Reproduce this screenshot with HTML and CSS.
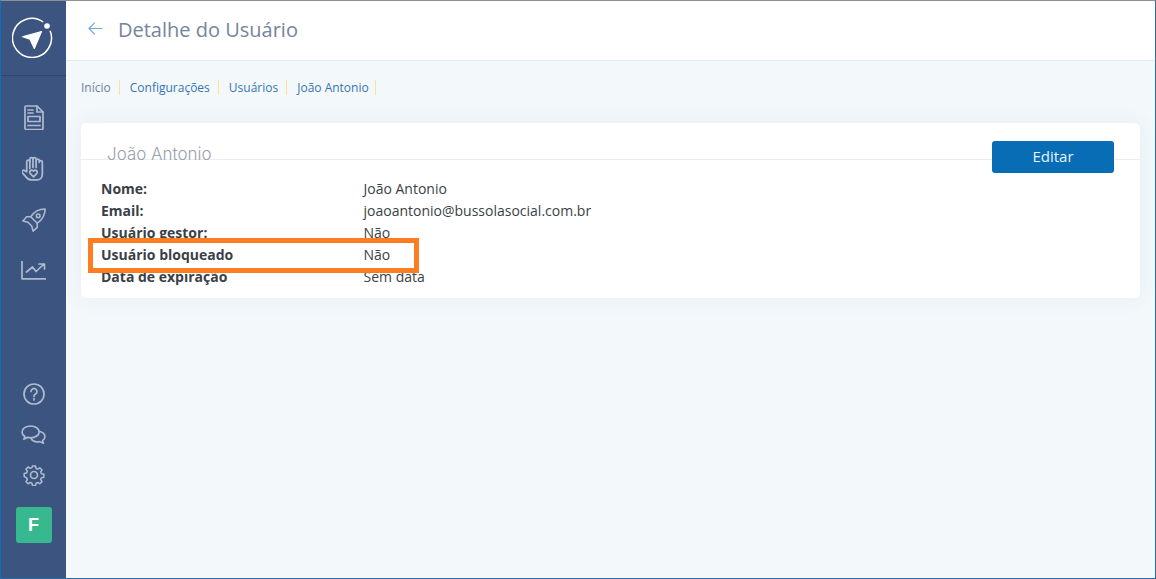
FILE: index.html
```html
<!DOCTYPE html>
<html lang="pt-BR">
<head>
<meta charset="utf-8">
<title>Detalhe do Usuário</title>
<link rel="stylesheet" href="styles.css">
</head>
<body>
<div class="app">
  <aside class="sidebar">
    <div class="logo">
      <svg class="logo-mark" width="42" height="42" viewBox="0 0 42 42" fill="none">
        <path d="M38.1 14.700A19.500 19.500 0 1 1 31.200 6" stroke="#fff" stroke-width="1.500"/>
        <circle cx="35" cy="10" r="2.800" fill="#fff"/>
        <path d="M10.500 20.800 29.500 15.500 22.300 32.500 18 23.200z" fill="#fff" stroke="#fff" stroke-width="1.200" stroke-linejoin="round"/>
      </svg>
    </div>
    <nav class="nav-top">
      <svg class="icon" width="20" height="25" viewBox="0 0 20 25"><path d="M2 1h11l6 6v16.500a1 1 0 0 1-1 1H2a1 1 0 0 1-1-1V2a1 1 0 0 1 1-1z"/><path d="M13 1v6h6M4 5h5M4 8h5M4 11.500h12v5H4zM4 20.500h12"/></svg>
      <svg class="icon" width="23" height="25" viewBox="0 0 22 24"><path d="M5.500 15V5.500a1.500 1.500 0 0 1 3 0V3a1.500 1.500 0 0 1 3 0V3a1.500 1.500 0 0 1 3 0v1.500a1.500 1.500 0 0 1 3 0V6a1.500 1.500 0 0 1 3 0v11c0 3.500-2 6-5 6h-5.500c-2.500 0-4-1.200-5.500-3.200L1.200 16c-1-1.500 1-3.200 2.300-2z" transform="translate(-1 0)"/><path d="M7.500 5v7M10.500 3v8M13.500 4.500V11M11 20l-3.300-3.400a1.900 1.900 0 0 1 2.800-2.500l.5.500.5-.500a1.900 1.900 0 0 1 2.800 2.500z"/></svg>
      <svg class="icon" width="24" height="24" viewBox="0 0 26 26"><path d="M25 1c-7 0-12 3-15.500 8.500l7 7C21.500 13 25 8 25 1z"/><circle cx="17.500" cy="8.500" r="2"/><path d="M9.500 9.500H5L1 14l5.500 1.500M16.500 16.500V21L12 25l-1.500-5.500M6.500 15.500l4 4"/></svg>
      <svg class="icon" width="25" height="19" viewBox="0 0 25 19"><path d="M1 0v17.800h24M5.500 11l6-5 3.500 4.500L23 3M18 3h5.500v5"/></svg>
    </nav>
    <nav class="nav-bottom">
      <svg class="icon" width="22" height="22" viewBox="0 0 22 22"><circle cx="11" cy="11" r="10"/><path d="M8 8.500a3 3 0 1 1 4.500 2.600c-1 .6-1.500 1.200-1.500 2.400M11 15.500v1.500"/></svg>
      <svg class="icon" width="25" height="19" viewBox="0 0 26 20"><path d="M10 1C5 1 1 3.800 1 7.300c0 2 1.200 3.700 3 4.800L2.800 15l4.200-2c1 .2 2 .4 3 .4 5 0 9-2.800 9-6.100S15 1 10 1z"/><path d="M19 6.500c3.300.8 6 3 6 5.800 0 1.800-1 3.200-2.500 4.200l1 2.700-4-1.700c-4 .7-7.500-.6-9-3.300"/></svg>
      <svg class="icon" width="22" height="22" viewBox="0 0 22 22"><circle cx="11" cy="11" r="3.500"/><path d="M9.300 1h3.400l.6 2.700 1.900.8 2.300-1.500 2.400 2.400-1.500 2.300.8 1.900 2.700.6v3.400l-2.700.6-.8 1.900 1.500 2.300-2.400 2.400-2.300-1.500-1.900.8-.6 2.700H9.300l-.6-2.700-1.900-.8-2.300 1.500-2.400-2.400 1.500-2.300-.8-1.900L.1 12.700V9.300l2.700-.6.8-1.900L2.100 4.500l2.400-2.400 2.300 1.500 1.900-.8z" transform="translate(1.100 1.100) scale(.9)"/></svg>
      <div class="avatar">F</div>
    </nav>
  </aside>
  <main class="main">
    <header class="topbar">
      <svg class="back" width="15" height="13" viewBox="0 0 15 13"><path d="M14.500 6.500H1M6.800 .7 1 6.500l5.800 5.800"/></svg>
      <h1 class="title">Detalhe do Usuário</h1>
    </header>
    <ul class="crumbs">
      <li>Início</li>
      <li>Configurações</li>
      <li>Usuários</li>
      <li>João Antonio</li>
    </ul>
    <section class="card">
      <div class="card-head">
        <h2 class="card-title">João Antonio</h2>
        <button class="edit" type="button">Editar</button>
      </div>
      <dl class="details">
        <div class="row"><dt>Nome:</dt><dd>João Antonio</dd></div>
        <div class="row"><dt>Email:</dt><dd>joaoantonio@bussolasocial.com.br</dd></div>
        <div class="row"><dt>Usuário gestor:</dt><dd>Não</dd></div>
        <div class="row"><dt>Usuário bloqueado</dt><dd>Não</dd></div>
        <div class="row"><dt>Data de expiração</dt><dd>Sem data</dd></div>
      </dl>
      <div class="highlight"></div>
    </section>
  </main>
</div>
</body>
</html>
```
FILE: styles.css
```css
* { box-sizing: border-box; }
html, body { margin: 0; height: 100%; }
body { font-family: "Open Sans", "Liberation Sans", sans-serif; background: #f3f8fb; }
.app {
  display: flex;
  width: 1156px;
  height: 579px;
  border-top: 1px solid #8f8f8f;
  border-left: 1px solid #1170bd;
  border-right: 1px solid #2a6ca6;
  border-bottom: 1px solid #2a6ca6;
  overflow: hidden;
}
.sidebar {
  width: 65px;
  flex: none;
  background: #3b5580;
  display: flex;
  flex-direction: column;
  align-items: center;
}
.logo {
  width: 100%;
  height: 75px;
  border-bottom: 1px solid #2f4668;
  display: flex;
  align-items: center;
  justify-content: center;
  padding: 0 0 2px 0;
}
.logo-mark { margin-left: -1px; }
.nav-top {
  display: grid;
  grid-auto-rows: 51px;
  place-items: center;
  padding-top: 16px;
}
.nav-bottom { margin-top: auto; display: flex; flex-direction: column; align-items: center; gap: 20px; padding-bottom: 35px; }
.icon { fill: none; stroke: #afbace; stroke-width: 1.700; stroke-linejoin: round; stroke-linecap: round; display: block; }
.avatar {
  width: 36px;
  height: 36px;
  margin-top: 1px;
  border-radius: 3px;
  background: #38b88f;
  color: #fff;
  font-family: "Liberation Sans", sans-serif;
  font-weight: 700;
  font-size: 18px;
  line-height: 36px;
  text-align: center;
}
.main { flex: 1; display: flex; flex-direction: column; min-width: 0; background: #f3f8fb; }
.topbar {
  height: 60px;
  flex: none;
  background: #fff;
  border-bottom: 1px solid #e2ebf2;
  display: flex;
  align-items: center;
  padding-left: 22px;
  gap: 15px;
}
.back { fill: none; stroke: #6fa8dc; stroke-width: 1.200; margin-top: -5px; }
.title { margin: 0; font-size: 20px; font-weight: 400; color: #75849a; margin-top: -2px; }
.crumbs { list-style: none; margin: 0; padding: 19px 0 0 15px; display: flex; height: 62px; flex: none; font-size: 12px; line-height: 15px; color: #3874b3; }
.crumbs li { height: 15px; padding-right: 8px; margin-right: 10px; border-right: 1px solid #fbe29a; }
.crumbs li:first-child { color: #71819f; }
.crumbs li:last-child { padding-right: 6px; }
.card {
  position: relative;
  margin: 0 15px 0 15px;
  width: 1059px;
  height: 175px;
  background: #fff;
  border-radius: 5px;
  box-shadow: 0 0 22px rgba(60, 90, 120, .07);
}
.card-head {
  height: 37px;
  border-bottom: 1px solid #e8eef5;
  display: flex;
  justify-content: space-between;
  align-items: flex-start;
  padding: 18px 26px 0 26px;
}
.card-title { margin: 0; font-family: "Inter", "Open Sans", sans-serif; font-weight: 300; font-size: 17px; line-height: 26px; color: #9a9fa9; white-space: nowrap; }
.edit {
  width: 122px;
  height: 32px;
  border: 0;
  padding: 0 0 2px;
  border-radius: 3px;
  background: #086db5;
  color: #e8f3fb;
  font-family: "Open Sans", sans-serif;
  font-size: 15px;
  position: relative;
}
.details { margin: 18px 0 0 20px; font-size: 14px; line-height: 22px; color: #3b3f46; }
.row { display: flex; height: 22px; }
.row dt { width: 262.500px; font-weight: 700; color: #3a3f48; }
.row dd { margin: 0; }
.highlight {
  position: absolute;
  left: 7px;
  top: 115px;
  width: 331px;
  height: 35px;
  border: 5px solid #fd7e22;
}
```
